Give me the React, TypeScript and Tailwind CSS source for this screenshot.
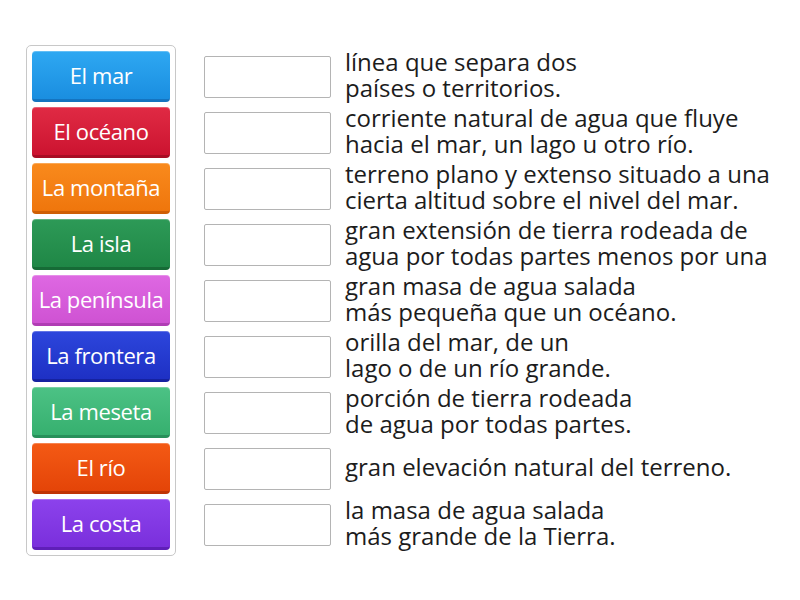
const items = [
  { label: 'El mar', cls: 'bg-gradient-to-b from-[#2ea8f2] to-[#1a8ee0] border-b-[#1474c0]' },
  { label: 'El océano', cls: 'bg-gradient-to-b from-[#e02a44] to-[#cc1230] border-b-[#a80c24]' },
  { label: 'La montaña', cls: 'bg-gradient-to-b from-[#f98a1c] to-[#ef760c] border-b-[#cf5f04]' },
  { label: 'La isla', cls: 'bg-gradient-to-b from-[#2d9a57] to-[#1f8746] border-b-[#166b36]' },
  { label: 'La península', cls: 'bg-gradient-to-b from-[#de68e2] to-[#cf52d3] border-b-[#b03cb4]' },
  { label: 'La frontera', cls: 'bg-gradient-to-b from-[#2d46dc] to-[#1e30c4] border-b-[#1522a0]' },
  { label: 'La meseta', cls: 'bg-gradient-to-b from-[#4cc285] to-[#36b06f] border-b-[#27905a]' },
  { label: 'El río', cls: 'bg-gradient-to-b from-[#f45a14] to-[#e44408] border-b-[#c03404]' },
  { label: 'La costa', cls: 'bg-gradient-to-b from-[#8c42ec] to-[#7a2fdc] border-b-[#5f1fb8]' },
]

const defs = [
  ['línea que separa dos', 'países o territorios.'],
  ['corriente natural de agua que fluye', 'hacia el mar, un lago u otro río.'],
  ['terreno plano y extenso situado a una', 'cierta altitud sobre el nivel del mar.'],
  ['gran extensión de tierra rodeada de', 'agua por todas partes menos por una'],
  ['gran masa de agua salada', 'más pequeña que un océano.'],
  ['orilla del mar, de un', 'lago o de un río grande.'],
  ['porción de tierra rodeada', 'de agua por todas partes.'],
  ['gran elevación natural del terreno.'],
  ['la masa de agua salada', 'más grande de la Tierra.'],
]

export default function App() {
  return (
    <div className="w-[800px] h-[600px] bg-white font-['Open_Sans',sans-serif] pl-[26px] pt-[45px] flex items-start">
      <div className="w-[150px] border border-[#c8c8c8] rounded-[5px] p-[5px] flex flex-col gap-[5px]">
        {items.map((it) => (
          <div
            key={it.label}
            className={`h-[51px] rounded-[4px] border-b-[3px] shadow-[inset_0_1px_0_rgba(255,255,255,0.25)] flex items-center justify-center text-white text-[22px] font-medium tracking-[-0.4px] whitespace-nowrap ${it.cls}`}
          >
            {it.label}
          </div>
        ))}
      </div>
      <div className="ml-[28px] pt-[6px] flex flex-col gap-[5px]">
        {defs.map((d, i) => (
          <div key={i} className="h-[51px] flex items-center">
            <div className="w-[127px] h-[42px] border border-[#b4b4b4] rounded-[2px] shrink-0" />
            <div className="ml-[14px] -mt-[4px] text-[24px] leading-[26px] text-[#1c1c1c] whitespace-nowrap">
              {d.map((l) => (
                <div key={l}>{l}</div>
              ))}
            </div>
          </div>
        ))}
      </div>
    </div>
  )
}
